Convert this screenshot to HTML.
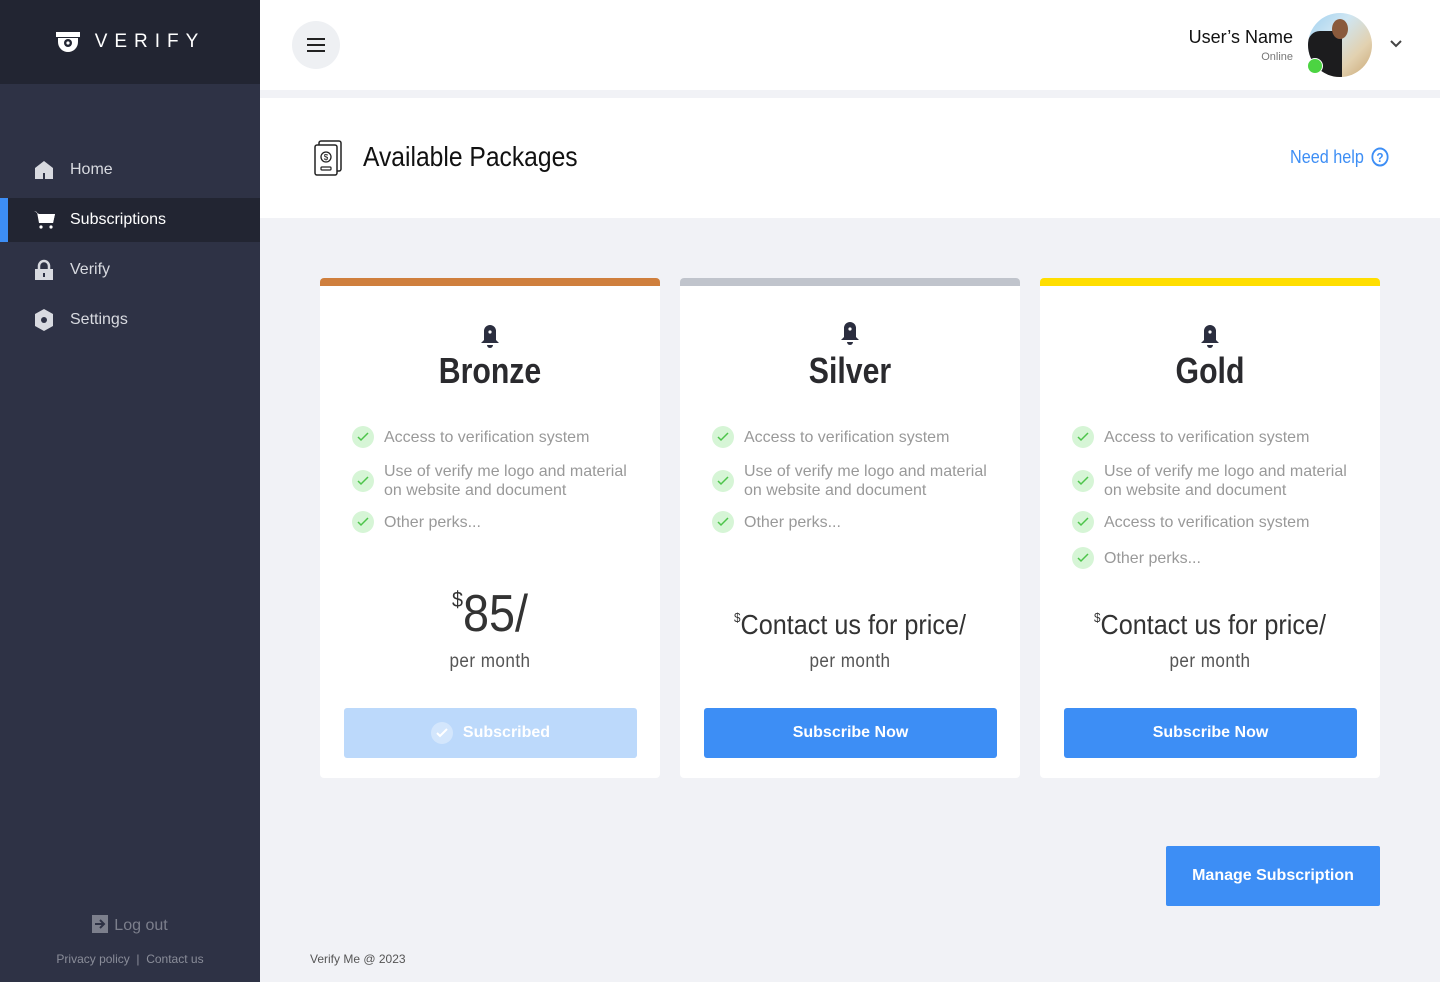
<!DOCTYPE html>
<html><head><meta charset="utf-8"><style>
*{margin:0;padding:0;box-sizing:border-box}
body{width:1440px;height:982px;overflow:hidden;font-family:"Liberation Sans",sans-serif;background:#f1f2f6;position:relative}
.sb{position:absolute;left:0;top:0;width:260px;height:982px;background:#2e3245}
.logo{height:84px;background:#222532;display:flex;align-items:center;justify-content:center;color:#fff;font-size:19px;letter-spacing:7px}
.nav{position:absolute;left:0;width:260px;height:44px;display:flex;align-items:center;color:#d8dae0;font-size:16px}
.nav svg{position:absolute;left:34px}
.nav span{position:absolute;left:70px}
.act{background:#222532;color:#fff}
.act:before{content:"";position:absolute;left:0;top:0;width:8px;height:44px;background:#3d8ef5}
.top{position:absolute;left:260px;top:0;width:1180px;height:90px;background:#fff}
.hdr{position:absolute;left:260px;top:98px;width:1180px;height:120px;background:#fff}
.card{position:absolute;top:278px;width:340px;height:500px;background:#fff;border-radius:4px;overflow:hidden}
.bar{height:8px}
.title{position:absolute;top:72px;width:100%;text-align:center;font-weight:bold;font-size:36px;color:#2a2a2e;transform:scaleX(0.84)}
.bell{position:absolute;left:160px;top:46px}
.feat{position:absolute;left:32px;width:290px;display:flex;align-items:center;color:#999;font-size:16px;line-height:19px}
.ck{width:22px;height:22px;border-radius:50%;background:#d6f5d6;flex:none;margin-right:10px;display:flex;align-items:center;justify-content:center}
.price{position:absolute;width:100%;text-align:center;color:#333;transform:scaleX(0.9)}
.pm{position:absolute;top:373px;width:100%;text-align:center;color:#555;font-size:19px;letter-spacing:0.5px;transform:scaleX(0.9)}
.btn{position:absolute;left:24px;top:430px;width:293px;height:50px;border-radius:3px;background:#3d8ef5;color:#fff;font-size:16px;font-weight:bold;display:flex;align-items:center;justify-content:center}
</style></head><body>
<div class="sb">
 <div class="logo"><svg width="26" height="24" viewBox="0 0 26 24" style="margin-right:14px"><rect x="1" y="2" width="24" height="5" fill="#fff"/><path d="M3 8h20v4a10 10 0 0 1-20 0z" fill="#fff"/><circle cx="13" cy="13" r="4" fill="#222532"/><circle cx="13" cy="13" r="1.6" fill="#fff"/></svg>VERIFY</div>
 <div class="nav" style="top:148px"><svg width="20" height="20" viewBox="0 0 20 20"><path d="M1 8L10 1l9 7v11H1z" fill="#d8dae0"/><rect x="9" y="13" width="2" height="6" fill="#2e3245"/></svg><span>Home</span></div>
 <div class="nav act" style="top:198px"><svg width="22" height="20" viewBox="0 0 22 20"><path d="M0 1l3 1 2 11h14l2-9H5" fill="#fff"/><path d="M4 4h17l-2 9H6z" fill="#fff"/><circle cx="7" cy="17" r="1.6" fill="#fff"/><circle cx="17" cy="17" r="1.6" fill="#fff"/></svg><span>Subscriptions</span></div>
 <div class="nav" style="top:248px"><svg width="20" height="22" viewBox="0 0 20 22"><path d="M5 10V7a5 5 0 0 1 10 0v3" stroke="#d8dae0" stroke-width="2.5" fill="none"/><rect x="1" y="10" width="18" height="11" fill="#d8dae0"/><rect x="9" y="14" width="2" height="4" fill="#2e3245"/></svg><span>Verify</span></div>
 <div class="nav" style="top:298px"><svg width="20" height="22" viewBox="0 0 20 22"><path d="M10 0l9 5v12l-9 5-9-5V5z" fill="#d8dae0"/><circle cx="10" cy="11" r="3" fill="#2e3245"/></svg><span>Settings</span></div>
 <div style="position:absolute;top:915px;left:0;width:260px;text-align:center;color:#7c7f8c;font-size:16px"><svg width="16" height="18" viewBox="0 0 16 18" style="vertical-align:-3px;margin-right:6px"><rect width="16" height="18" fill="#7c7f8c"/><path d="M3 9h8M8 5l4 4-4 4" stroke="#2e3245" stroke-width="2" fill="none"/></svg>Log out</div>
 <div style="position:absolute;top:952px;left:0;width:260px;text-align:center;color:#8a8d99;font-size:12px">Privacy policy &nbsp;|&nbsp; Contact us</div>
</div>
<div class="top">
 <div style="position:absolute;left:32px;top:21px;width:48px;height:48px;border-radius:50%;background:#eef0f3;display:flex;align-items:center;justify-content:center"><svg width="20" height="16"><path d="M1 2h18M1 8h18M1 14h18" stroke="#222" stroke-width="2"/></svg></div>
 <div style="position:absolute;right:147px;top:27px;text-align:right"><div style="font-size:18px;color:#111">User’s Name</div><div style="font-size:11px;color:#777;margin-top:3px">Online</div></div>
 <div style="position:absolute;left:1048px;top:13px;width:64px;height:64px;border-radius:50%;background:linear-gradient(135deg,#9fd0f0 0%,#cfe6f2 35%,#e2d1b0 70%,#c9a673 100%);overflow:hidden"><div style="position:absolute;left:0;top:18px;width:34px;height:46px;background:#1c1c1e;border-radius:12px 8px 0 0"></div><div style="position:absolute;left:24px;top:6px;width:16px;height:20px;background:#8a5a3c;border-radius:50%"></div></div>
 <div style="position:absolute;left:1047px;top:58px;width:16px;height:16px;border-radius:50%;background:#4cd442;border:1px solid #fff"></div>
 <svg style="position:absolute;left:1129px;top:39px" width="14" height="10"><path d="M2 2l5 5 5-5" stroke="#444" stroke-width="2" fill="none"/></svg>
</div>
<div class="hdr">
 <svg style="position:absolute;left:53px;top:42px" width="30" height="36" viewBox="0 0 30 36"><rect x="6" y="1" width="22" height="30" rx="2" fill="none" stroke="#222" stroke-width="1.5"/><rect x="2" y="5" width="22" height="30" rx="2" fill="#fff" stroke="#222" stroke-width="1.5"/><circle cx="13" cy="17" r="5" fill="none" stroke="#222" stroke-width="1.3"/><text x="13" y="20" font-size="8" text-anchor="middle" font-family="Liberation Sans">$</text><rect x="8" y="27" width="10" height="3" rx="1" fill="none" stroke="#222" stroke-width="1.2"/></svg>
 <div style="position:absolute;left:103px;top:43px;font-size:28px;color:#111;transform:scaleX(0.88);transform-origin:left">Available Packages</div>
 <div style="position:absolute;left:1030px;top:49px;font-size:18px;color:#3d8ef5;transform:scaleX(0.9);transform-origin:left">Need help <svg width="20" height="20" style="vertical-align:-4px;margin-left:3px"><circle cx="10" cy="10" r="8.5" stroke="#3d8ef5" stroke-width="2" fill="none"/><text x="10" y="15" font-size="13" font-weight="bold" text-anchor="middle" fill="#3d8ef5" font-family="Liberation Sans">?</text></svg></div>
</div>

<div class="card" style="left:320px"><div class="bar" style="background:#cf7f3d"></div>
 <svg class="bell" width="20" height="26" viewBox="0 0 20 26"><path d="M10 1a6 6 0 0 1 6 6v9l3 3H1l3-3V7a6 6 0 0 1 6-6z" fill="#2b2e3f"/><circle cx="10" cy="8" r="1.6" fill="#fff"/><path d="M7 21h6a3 3 0 0 1-6 0z" fill="#2b2e3f"/></svg>
 <div class="title">Bronze</div>
 <div class="feat" style="top:148px"><div class="ck"><svg width="12" height="10"><path d="M1 5l3 3 7-7" stroke="#4cc44a" stroke-width="1.5" fill="none"/></svg></div>Access to verification system</div>
 <div class="feat" style="top:184px"><div class="ck"><svg width="12" height="10"><path d="M1 5l3 3 7-7" stroke="#4cc44a" stroke-width="1.5" fill="none"/></svg></div>Use of verify me logo and material on website and document</div>
 <div class="feat" style="top:233px"><div class="ck"><svg width="12" height="10"><path d="M1 5l3 3 7-7" stroke="#4cc44a" stroke-width="1.5" fill="none"/></svg></div>Other perks...</div>
 <div class="price" style="top:306px;font-size:52px"><sup style="font-size:22px;vertical-align:24px">$</sup>85/</div>
 <div class="pm">per month</div>
 <div class="btn" style="background:#bcd9fb"><span style="width:22px;height:22px;border-radius:50%;background:rgba(255,255,255,.35);display:inline-flex;align-items:center;justify-content:center;margin-right:10px"><svg width="12" height="10"><path d="M1 5l3 3 7-7" stroke="#fff" stroke-width="2" fill="none"/></svg></span>Subscribed</div>
</div>

<div class="card" style="left:680px"><div class="bar" style="background:#c0c4cc"></div>
 <svg class="bell" width="20" height="26" viewBox="0 0 20 26" style="top:43px"><path d="M10 1a6 6 0 0 1 6 6v9l3 3H1l3-3V7a6 6 0 0 1 6-6z" fill="#2b2e3f"/><circle cx="10" cy="8" r="1.6" fill="#fff"/><path d="M7 21h6a3 3 0 0 1-6 0z" fill="#2b2e3f"/></svg>
 <div class="title">Silver</div>
 <div class="feat" style="top:148px"><div class="ck"><svg width="12" height="10"><path d="M1 5l3 3 7-7" stroke="#4cc44a" stroke-width="1.5" fill="none"/></svg></div>Access to verification system</div>
 <div class="feat" style="top:184px"><div class="ck"><svg width="12" height="10"><path d="M1 5l3 3 7-7" stroke="#4cc44a" stroke-width="1.5" fill="none"/></svg></div>Use of verify me logo and material on website and document</div>
 <div class="feat" style="top:233px"><div class="ck"><svg width="12" height="10"><path d="M1 5l3 3 7-7" stroke="#4cc44a" stroke-width="1.5" fill="none"/></svg></div>Other perks...</div>
 <div class="price" style="top:331px;font-size:28px"><sup style="font-size:13px;vertical-align:12px">$</sup>Contact us for price/</div>
 <div class="pm">per month</div>
 <div class="btn">Subscribe Now</div>
</div>

<div class="card" style="left:1040px"><div class="bar" style="background:#ffde00"></div>
 <svg class="bell" width="20" height="26" viewBox="0 0 20 26"><path d="M10 1a6 6 0 0 1 6 6v9l3 3H1l3-3V7a6 6 0 0 1 6-6z" fill="#2b2e3f"/><circle cx="10" cy="8" r="1.6" fill="#fff"/><path d="M7 21h6a3 3 0 0 1-6 0z" fill="#2b2e3f"/></svg>
 <div class="title">Gold</div>
 <div class="feat" style="top:148px"><div class="ck"><svg width="12" height="10"><path d="M1 5l3 3 7-7" stroke="#4cc44a" stroke-width="1.5" fill="none"/></svg></div>Access to verification system</div>
 <div class="feat" style="top:184px"><div class="ck"><svg width="12" height="10"><path d="M1 5l3 3 7-7" stroke="#4cc44a" stroke-width="1.5" fill="none"/></svg></div>Use of verify me logo and material on website and document</div>
 <div class="feat" style="top:233px"><div class="ck"><svg width="12" height="10"><path d="M1 5l3 3 7-7" stroke="#4cc44a" stroke-width="1.5" fill="none"/></svg></div>Access to verification system</div>
 <div class="feat" style="top:269px"><div class="ck"><svg width="12" height="10"><path d="M1 5l3 3 7-7" stroke="#4cc44a" stroke-width="1.5" fill="none"/></svg></div>Other perks...</div>
 <div class="price" style="top:331px;font-size:28px"><sup style="font-size:13px;vertical-align:12px">$</sup>Contact us for price/</div>
 <div class="pm">per month</div>
 <div class="btn">Subscribe Now</div>
</div>

<div style="position:absolute;left:1166px;top:846px;width:214px;height:60px;background:#3d8ef5;border-radius:2px;color:#fff;font-size:16px;font-weight:bold;display:flex;align-items:center;justify-content:center">Manage Subscription</div>
<div style="position:absolute;left:310px;top:952px;font-size:12px;color:#555">Verify Me @ 2023</div>
</body></html>
